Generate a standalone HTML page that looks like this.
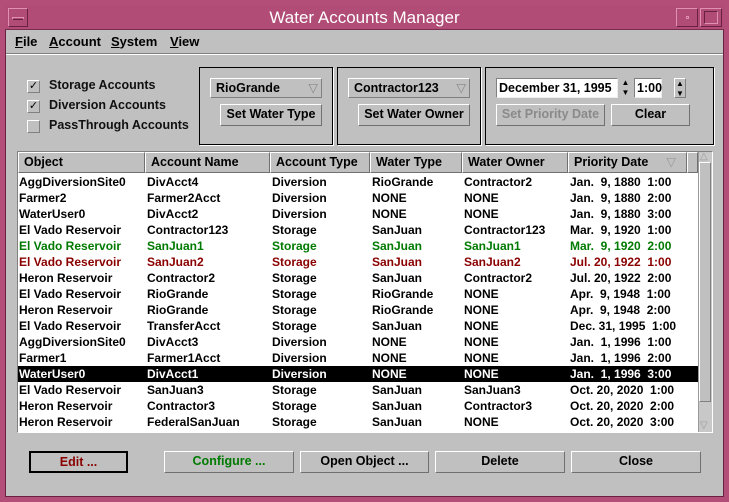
<!DOCTYPE html>
<html><head><meta charset="utf-8"><style>
*{box-sizing:border-box;margin:0;padding:0}
body{width:729px;height:502px;background:#b24e78;font-family:"Liberation Sans",sans-serif;position:relative;overflow:hidden;font-size:12px}
.abs{position:absolute}
#win{left:5px;top:5px;width:719px;height:492px;background:#c0c0c0;border:1px solid #6a2040}
#title{left:5px;top:5px;width:719px;height:25px;background:#b04c76;color:#fff;font-size:17px;text-align:center;line-height:25px;border-bottom:1px solid #7a2c50}
.tb{top:8px;height:19px;border:1px solid #e090b0;border-right-color:#6a2040;border-bottom-color:#6a2040}
.menu{top:34px;font-size:13px;font-weight:bold;color:#000}
.menu u{text-decoration:underline}
.cb{width:13px;height:13px;border:1px solid #fff;border-right-color:#808080;border-bottom-color:#808080;font-size:11px;line-height:11px;text-align:center}
.lbl{font-size:12.5px;font-weight:bold;color:#111}
.grp{border:1px solid #000;box-shadow:1px 1px 0 #fff}
.btn{border:1px solid #fff;border-right-color:#707070;border-bottom-color:#707070;text-align:center;font-weight:bold;font-size:12.5px;line-height:19px;background:#c0c0c0}
.combo{border:1px solid #fff;border-right-color:#808080;border-bottom-color:#808080;font-weight:bold;font-size:12.5px;line-height:18px;padding-left:5px}
.field{background:#fff;border:1px solid #808080;border-right-color:#eee;border-bottom-color:#eee;font-weight:bold;font-size:12.5px;line-height:18px;padding-left:2px}
#tbl{left:17px;top:151px;width:696px;height:282px;background:#fff;border:1px solid #808080;border-right-color:#fff;border-bottom-color:#fff}
.hd{top:152px;height:21px;background:#c0c0c0;border:1px solid #fff;border-right-color:#707070;border-bottom-color:#707070;font-weight:bold;font-size:12.5px;line-height:19px;padding-left:5px}
.row{left:18px;width:680px;height:16px;font-weight:bold;font-size:12px;line-height:16px;white-space:nowrap}
.row span{position:absolute;top:0}
.g{color:#007a00}.r{color:#8a0000}.s{background:#000;color:#fff}
</style></head><body>
<div id="win" class="abs"></div>
<div id="title" class="abs">Water Accounts Manager</div>
<div class="abs tb" style="left:8px;width:20px"><div style="margin:8px 3px 0;height:3px;border:1px solid #e090b0;border-bottom-color:#6a2040"></div></div>
<div class="abs tb" style="left:676px;width:22px"><div style="margin:7px auto 0;width:3px;height:3px;border:1px solid #e090b0"></div></div>
<div class="abs tb" style="left:700px;width:22px"><div style="margin:2px auto 0;width:14px;height:13px;border:1px solid #e090b0;border-left-color:#6a2040;border-top-color:#6a2040"></div></div>
<div class="abs" style="left:6px;top:53px;width:717px;height:1px;background:#808080"></div>
<div class="abs" style="left:6px;top:54px;width:717px;height:1px;background:#fff"></div>
<div class="abs menu" style="left:15px"><u>F</u>ile</div>
<div class="abs menu" style="left:49px"><u>A</u>ccount</div>
<div class="abs menu" style="left:111px"><u>S</u>ystem</div>
<div class="abs menu" style="left:170px"><u>V</u>iew</div>

<div class="abs cb" style="left:27px;top:80px">✓</div><div class="abs lbl" style="left:49px;top:78px">Storage Accounts</div>
<div class="abs cb" style="left:27px;top:100px">✓</div><div class="abs lbl" style="left:49px;top:98px">Diversion Accounts</div>
<div class="abs cb" style="left:27px;top:120px"></div><div class="abs lbl" style="left:49px;top:118px">PassThrough Accounts</div>

<div class="abs grp" style="left:199px;top:67px;width:134px;height:78px"></div>
<div class="abs grp" style="left:337px;top:67px;width:144px;height:78px"></div>
<div class="abs grp" style="left:485px;top:67px;width:229px;height:78px"></div>
<div class="abs combo" style="left:210px;top:78px;width:112px;height:20px">RioGrande<span style="position:absolute;right:3px;top:0;color:#888;font-weight:normal">▽</span></div>
<div class="abs btn" style="left:220px;top:104px;width:102px;height:22px">Set Water Type</div>
<div class="abs combo" style="left:348px;top:78px;width:122px;height:20px">Contractor123<span style="position:absolute;right:3px;top:0;color:#888;font-weight:normal">▽</span></div>
<div class="abs btn" style="left:358px;top:104px;width:112px;height:22px">Set Water Owner</div>
<div class="abs field" style="left:496px;top:78px;width:122px;height:20px">December 31, 1995</div>
<div class="abs" style="left:619px;top:78px;width:13px;height:20px;font-size:8px;line-height:10px;text-align:center">▲<br>▼</div>
<div class="abs field" style="left:634px;top:78px;width:28px;height:20px">1:00</div>
<div class="abs" style="left:674px;top:78px;width:12px;height:20px;font-size:8px;line-height:10px;text-align:center;border:1px solid #fff;border-right-color:#808080;border-bottom-color:#808080">▲<br>▼</div>
<div class="abs btn" style="left:496px;top:104px;width:109px;height:22px;color:#8a8a8a">Set Priority Date</div>
<div class="abs btn" style="left:611px;top:104px;width:79px;height:22px">Clear</div>

<div id="tbl" class="abs"></div>
<div class="abs hd" style="left:18px;width:127px">Object</div>
<div class="abs hd" style="left:145px;width:125px">Account Name</div>
<div class="abs hd" style="left:270px;width:100px">Account Type</div>
<div class="abs hd" style="left:370px;width:92px">Water Type</div>
<div class="abs hd" style="left:462px;width:106px">Water Owner</div>
<div class="abs hd" style="left:568px;width:119px">Priority Date<span style="position:absolute;right:10px;color:#999;font-weight:normal">▽</span></div>
<div class="abs hd" style="left:687px;width:11px"></div>
<div class="abs" style="left:698px;top:152px;width:14px;height:280px;background:#c8c8c8;border-left:1px solid #999"></div>
<div class="abs" style="left:699px;top:162px;width:12px;height:240px;background:#c0c0c0;border:1px solid #fff;border-right-color:#808080;border-bottom-color:#808080"></div>
<div class="abs" style="left:700px;top:151px;font-size:10px;color:#999">△</div>
<div class="abs" style="left:700px;top:420px;font-size:10px;color:#999">▽</div>

<div id="rows"></div>
<script>
var d=[["AggDiversionSite0","DivAcct4","Diversion","RioGrande","Contractor2","Jan.&nbsp; 9, 1880&nbsp; 1:00",""],
["Farmer2","Farmer2Acct","Diversion","NONE","NONE","Jan.&nbsp; 9, 1880&nbsp; 2:00",""],
["WaterUser0","DivAcct2","Diversion","NONE","NONE","Jan.&nbsp; 9, 1880&nbsp; 3:00",""],
["El Vado Reservoir","Contractor123","Storage","SanJuan","Contractor123","Mar.&nbsp; 9, 1920&nbsp; 1:00",""],
["El Vado Reservoir","SanJuan1","Storage","SanJuan","SanJuan1","Mar.&nbsp; 9, 1920&nbsp; 2:00","g"],
["El Vado Reservoir","SanJuan2","Storage","SanJuan","SanJuan2","Jul. 20, 1922&nbsp; 1:00","r"],
["Heron Reservoir","Contractor2","Storage","SanJuan","Contractor2","Jul. 20, 1922&nbsp; 2:00",""],
["El Vado Reservoir","RioGrande","Storage","RioGrande","NONE","Apr.&nbsp; 9, 1948&nbsp; 1:00",""],
["Heron Reservoir","RioGrande","Storage","RioGrande","NONE","Apr.&nbsp; 9, 1948&nbsp; 2:00",""],
["El Vado Reservoir","TransferAcct","Storage","SanJuan","NONE","Dec. 31, 1995&nbsp; 1:00",""],
["AggDiversionSite0","DivAcct3","Diversion","NONE","NONE","Jan.&nbsp; 1, 1996&nbsp; 1:00",""],
["Farmer1","Farmer1Acct","Diversion","NONE","NONE","Jan.&nbsp; 1, 1996&nbsp; 2:00",""],
["WaterUser0","DivAcct1","Diversion","NONE","NONE","Jan.&nbsp; 1, 1996&nbsp; 3:00","s"],
["El Vado Reservoir","SanJuan3","Storage","SanJuan","SanJuan3","Oct. 20, 2020&nbsp; 1:00",""],
["Heron Reservoir","Contractor3","Storage","SanJuan","Contractor3","Oct. 20, 2020&nbsp; 2:00",""],
["Heron Reservoir","FederalSanJuan","Storage","SanJuan","NONE","Oct. 20, 2020&nbsp; 3:00",""]];
var xs=[1,129,254,354,446,552],h="";
d.forEach(function(r,i){h+='<div class="abs row '+r[6]+'" style="top:'+(174+i*16)+'px">';
for(var j=0;j<6;j++)h+='<span style="left:'+xs[j]+'px">'+r[j]+'</span>';h+='</div>';});
document.getElementById('rows').innerHTML=h;
</script>

<div class="abs btn" style="left:29px;top:451px;width:99px;height:22px;border:2px solid #000;color:#8a0000;line-height:18px">Edit ...</div>
<div class="abs btn" style="left:164px;top:451px;width:130px;height:22px;color:#007a00">Configure ...</div>
<div class="abs btn" style="left:300px;top:451px;width:129px;height:22px">Open Object ...</div>
<div class="abs btn" style="left:435px;top:451px;width:130px;height:22px">Delete</div>
<div class="abs btn" style="left:571px;top:451px;width:130px;height:22px">Close</div>
</body></html>
